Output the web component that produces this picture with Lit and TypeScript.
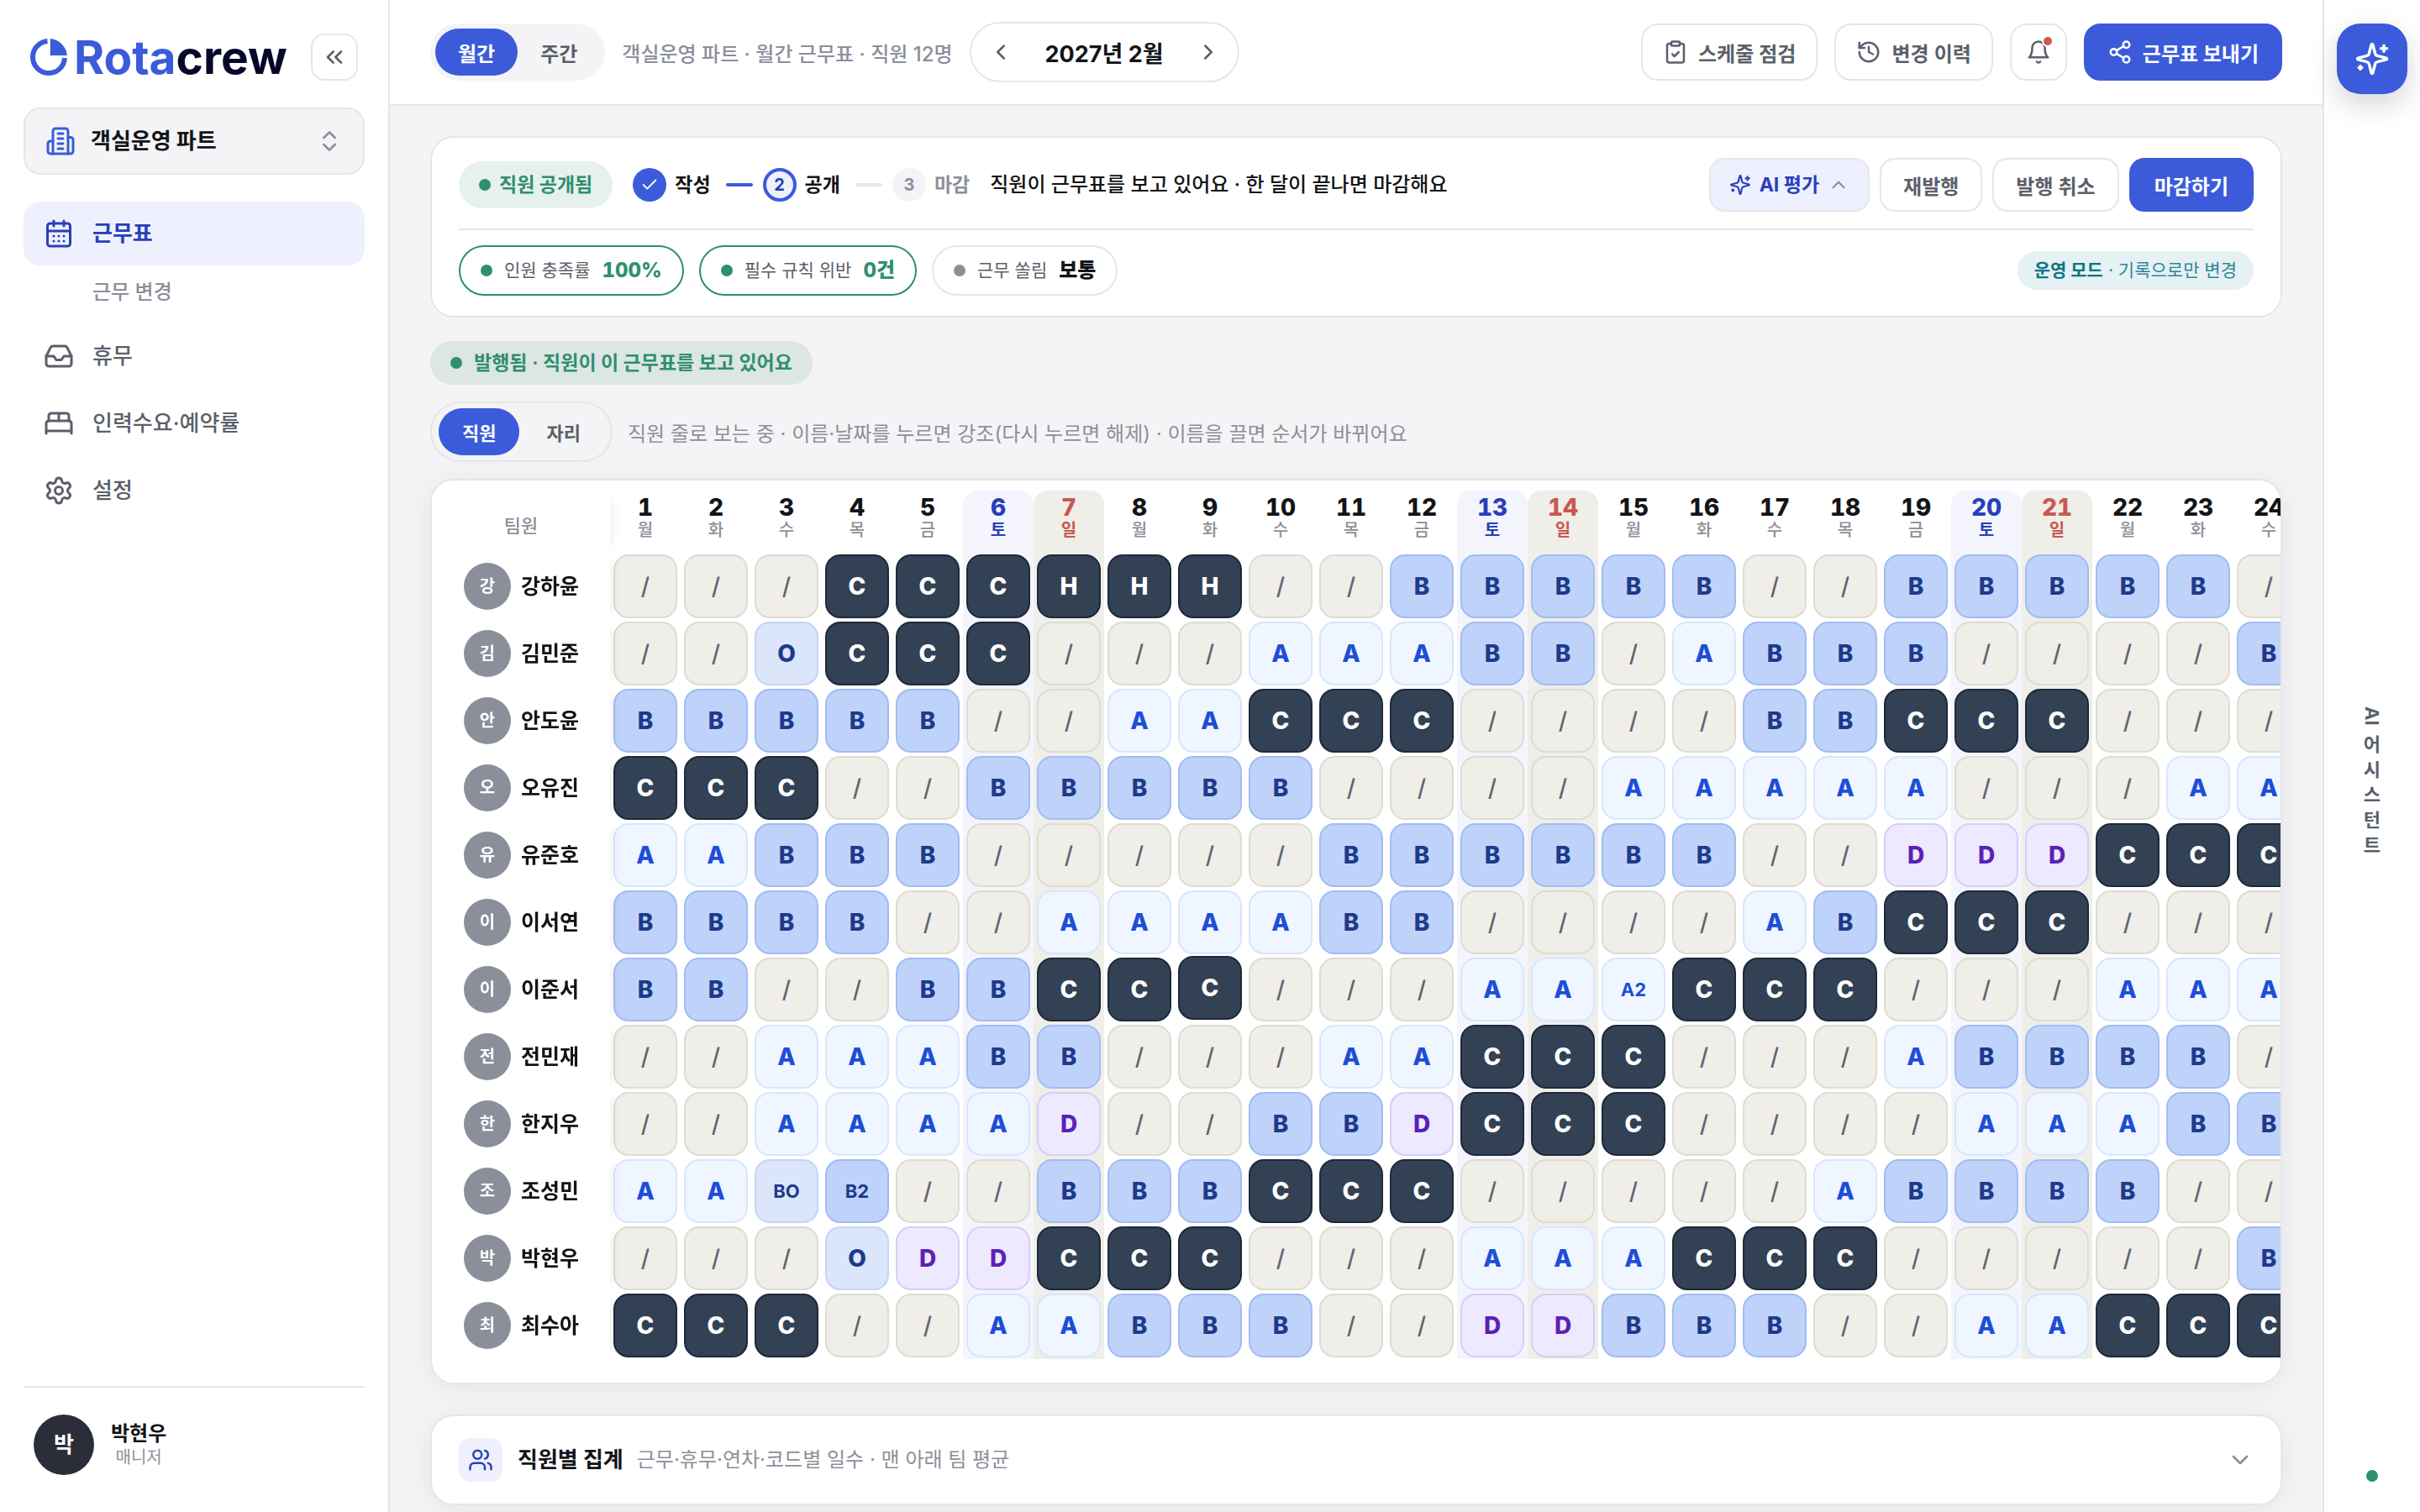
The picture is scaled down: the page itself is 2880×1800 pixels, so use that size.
import { LitElement, html, css, svg, nothing } from "lit";
import { customElement, property, state } from "lit/decorators.js";
import { classMap } from "lit/directives/class-map.js";

const ICONS = {
  collapse: svg`<path d="m11 17-5-5 5-5"/><path d="m18 17-5-5 5-5"/>`,
  building: svg`<path d="M6 22V4a2 2 0 0 1 2-2h8a2 2 0 0 1 2 2v18Z"/><path d="M6 12H4a2 2 0 0 0-2 2v6a2 2 0 0 0 2 2h2"/><path d="M18 9h2a2 2 0 0 1 2 2v9a2 2 0 0 1-2 2h-2"/><path d="M10 6h4"/><path d="M10 10h4"/><path d="M10 14h4"/><path d="M10 18h4"/>`,
  updown: svg`<path d="m7 15 5 5 5-5"/><path d="m7 9 5-5 5 5"/>`,
  calendar: svg`<path d="M8 2v4"/><path d="M16 2v4"/><rect width="18" height="18" x="3" y="4" rx="2"/><path d="M3 10h18"/><path d="M8 14h.01"/><path d="M12 14h.01"/><path d="M16 14h.01"/><path d="M8 18h.01"/><path d="M12 18h.01"/><path d="M16 18h.01"/>`,
  inbox: svg`<path d="M22 12h-6l-2 3h-4l-2-3H2"/><path d="M5.45 5.11 2 12v6a2 2 0 0 0 2 2h16a2 2 0 0 0 2-2v-6l-3.45-6.89A2 2 0 0 0 16.76 4H7.24a2 2 0 0 0-1.79 1.11z"/>`,
  bed: svg`<path d="M2 20v-8a2 2 0 0 1 2-2h16a2 2 0 0 1 2 2v8"/><path d="M4 10V6a2 2 0 0 1 2-2h12a2 2 0 0 1 2 2v4"/><path d="M12 4v6"/><path d="M2 18h20"/>`,
  settings: svg`<path d="M9.671 4.136a2.34 2.34 0 0 1 4.659 0 2.34 2.34 0 0 0 3.319 1.915 2.34 2.34 0 0 1 2.33 4.033 2.34 2.34 0 0 0 0 3.831 2.34 2.34 0 0 1-2.33 4.033 2.34 2.34 0 0 0-3.319 1.915 2.34 2.34 0 0 1-4.659 0 2.34 2.34 0 0 0-3.32-1.915 2.34 2.34 0 0 1-2.33-4.033 2.34 2.34 0 0 0 0-3.831A2.34 2.34 0 0 1 6.35 6.051a2.34 2.34 0 0 0 3.319-1.915"/><circle cx="12" cy="12" r="3"/>`,
  left: svg`<path d="m15 18-6-6 6-6"/>`,
  right: svg`<path d="m9 18 6-6-6-6"/>`,
  up: svg`<path d="m18 15-6-6-6 6"/>`,
  down: svg`<path d="m6 9 6 6 6-6"/>`,
  check: svg`<path d="M20 6 9 17l-5-5"/>`,
  clipboard: svg`<rect width="8" height="4" x="8" y="2" rx="1"/><path d="M16 4h2a2 2 0 0 1 2 2v14a2 2 0 0 1-2 2H6a2 2 0 0 1-2-2V6a2 2 0 0 1 2-2h2"/><path d="m9 14 2 2 4-4"/>`,
  history: svg`<path d="M3 12a9 9 0 1 0 9-9 9.75 9.75 0 0 0-6.74 2.74L3 8"/><path d="M3 3v5h5"/><path d="M12 7v5l4 2"/>`,
  bell: svg`<path d="M6 8a6 6 0 0 1 12 0c0 7 3 9 3 9H3s3-2 3-9"/><path d="M10.3 21a1.94 1.94 0 0 0 3.4 0"/>`,
  share: svg`<circle cx="18" cy="5" r="3"/><circle cx="6" cy="12" r="3"/><circle cx="18" cy="19" r="3"/><path d="m8.59 13.51 6.83 3.98"/><path d="m15.41 6.51-6.82 3.98"/>`,
  sparkles: svg`<path d="M9.937 15.5A2 2 0 0 0 8.5 14.063l-6.135-1.582a.5.5 0 0 1 0-.962L8.5 9.936A2 2 0 0 0 9.937 8.5l1.582-6.135a.5.5 0 0 1 .963 0L14.063 8.5A2 2 0 0 0 15.5 9.937l6.135 1.581a.5.5 0 0 1 0 .964L15.5 14.063a2 2 0 0 0-1.437 1.437l-1.582 6.135a.5.5 0 0 1-.963 0z"/><path d="M20 3v4"/><path d="M22 5h-4"/><path d="M4 17v2"/><path d="M5 18H3"/>`,
  users: svg`<path d="M16 21v-2a4 4 0 0 0-4-4H6a4 4 0 0 0-4 4v2"/><circle cx="9" cy="7" r="4"/><path d="M22 21v-2a4 4 0 0 0-3-3.87"/><path d="M16 3.13a4 4 0 0 1 0 7.75"/>`,
};
type IconName = keyof typeof ICONS;

const icon = (name: IconName, size: number, stroke = 2) => html`
  <svg width=${size} height=${size} viewBox="0 0 24 24" fill="none" stroke="currentColor"
    stroke-width=${stroke} stroke-linecap="round" stroke-linejoin="round" aria-hidden="true">${ICONS[name]}</svg>`;

const WEEKDAYS = ["월", "화", "수", "목", "금", "토", "일"];
const DAYS = Array.from({ length: 24 }, (_, i) => ({ day: i + 1, label: WEEKDAYS[i % 7] }));

const ROSTER: { name: string; shifts: string[] }[] = [
  ["강하윤", "/ / / C C C H H H / / B B B B B / / B B B B B /"],
  ["김민준", "/ / O C C C / / / A A A B B / A B B B / / / / B"],
  ["안도윤", "B B B B B / / A A C C C / / / / B B C C C / / /"],
  ["오유진", "C C C / / B B B B B / / / / A A A A A / / / A A"],
  ["유준호", "A A B B B / / / / / B B B B B B / / D D D C C C"],
  ["이서연", "B B B B / / A A A A B B / / / / A B C C C / / /"],
  ["이준서", "B B / / B B C C C / / / A A A2 C C C / / / A A A"],
  ["전민재", "/ / A A A B B / / / A A C C C / / / A B B B B /"],
  ["한지우", "/ / A A A A D / / B B D C C C / / / / A A A B B"],
  ["조성민", "A A BO B2 / / B B B C C C / / / / / A B B B B / /"],
  ["박현우", "/ / / O D D C C C / / / A A A C C C / / / / / B"],
  ["최수아", "C C C / / A A B B B / / D D B B B / / A A C C C"],
].map(([name, codes]) => ({ name, shifts: codes.split(" ") }));

const SHIFT_CLASS: Record<string, string> = {
  "/": "off", A: "a", A2: "a", B: "b", B2: "b", C: "c", H: "c", D: "d", O: "o", BO: "o",
};

const base = css`
  * { box-sizing: border-box; }
  button {
    font: inherit; color: inherit; background: none; border: 0; padding: 0; margin: 0; cursor: pointer;
  }
  a { color: inherit; text-decoration: none; }
  svg { display: block; flex: none; }
`;

@customElement("rota-sidebar")
export class RotaSidebar extends LitElement {
  static styles = [base, css`
    :host { display: flex; flex-direction: column; background: #fff; border-right: 2px solid #e6e6ea; padding: 40px 28px 44px; }
    .head { display: flex; align-items: center; justify-content: space-between; padding: 0 8px; }
    .logo { display: flex; align-items: center; gap: 8px; font-size: 55px; line-height: 56px; font-weight: 700; color: #07072b; }
    .logo .blue { color: #3b5bdb; }
    .collapse {
      width: 56px; height: 56px; border: 2px solid #e6e6ea; border-radius: 16px; color: #5b5f6b;
      display: flex; align-items: center; justify-content: center;
    }
    .team {
      display: flex; align-items: center; gap: 18px; height: 80px; margin-top: 32px; padding: 0 24px;
      background: #f4f4f6; border: 2px solid #e6e6ea; border-radius: 20px;
      font-size: 26px; font-weight: 700; color: #131417; text-align: left;
    }
    .team .lead { color: #3b5bdb; }
    .team .name { flex: 1; }
    .team .tail { color: #8b8f9a; }
    nav { display: flex; flex-direction: column; gap: 4px; margin-top: 32px; }
    .item {
      display: flex; align-items: center; gap: 22px; height: 76px; padding: 0 24px; border-radius: 20px;
      font-size: 26px; font-weight: 500; color: #5b5f6b;
    }
    .item.active { background: #eef0fe; color: #2740b8; font-weight: 700; }
    .sub { height: 56px; line-height: 56px; margin-bottom: 6px; padding-left: 82px; font-size: 24px; font-weight: 500; color: #8b8f9a; }
    .user { margin-top: auto; border-top: 2px solid #e6e6ea; padding: 32px 12px 0; }
    .user button { display: flex; align-items: center; gap: 20px; }
    .avatar {
      width: 72px; height: 72px; border-radius: 50%; background: #2b2e38; color: #fff;
      display: flex; align-items: center; justify-content: center; font-size: 26px; font-weight: 700;
    }
    .who { display: flex; flex-direction: column; }
    .who b { font-size: 24px; line-height: 30px; color: #131417; }
    .who span { font-size: 20px; line-height: 26px; color: #8b8f9a; }
  `];

  render() {
    return html`
      <div class="head">
        <div class="logo">
          <svg width="44" height="44" viewBox="0 0 44 44" aria-hidden="true">
            <path d="M20.5 3.06A19 19 0 1 0 40.97 23" fill="none" stroke="#3b5bdb" stroke-width="6"/>
            <path d="M23.8 20V.1A22 22 0 0 1 43.9 20Z" fill="#3b5bdb"/>
          </svg>
          <span><span class="blue">Rota</span>crew</span>
        </div>
        <button class="collapse" aria-label="사이드바 접기">${icon("collapse", 32)}</button>
      </div>
      <button class="team">
        <span class="lead">${icon("building", 36)}</span>
        <span class="name">객실운영 파트</span>
        <span class="tail">${icon("updown", 32)}</span>
      </button>
      <nav>
        <a class="item active" href="#schedule" aria-current="page">${icon("calendar", 36)}근무표</a>
        <a class="sub" href="#changes">근무 변경</a>
        <a class="item" href="#leave">${icon("inbox", 36)}휴무</a>
        <a class="item" href="#demand">${icon("bed", 36)}인력수요·예약률</a>
        <a class="item" href="#settings">${icon("settings", 36)}설정</a>
      </nav>
      <div class="user">
        <button>
          <span class="avatar">박</span>
          <span class="who"><b>박현우</b><span>매니저</span></span>
        </button>
      </div>`;
  }
}

@customElement("rota-segment")
export class RotaSegment extends LitElement {
  @property({ attribute: false }) options: string[] = [];
  @property({ type: Boolean, reflect: true }) outlined = false;
  @state() private selected = 0;

  static styles = [base, css`
    :host { display: flex; padding: 6px; border-radius: 36px; background: #f4f4f6; font-size: 24px; font-weight: 600; }
    :host([outlined]) { border: 2px solid #e6e6ea; gap: 4px; padding: 6px 8px; font-size: 22px; }
    button { height: 56px; padding: 0 27px; border-radius: 28px; color: #5b5f6b; }
    :host([outlined]) button { padding: 0 28px; }
    button.on { background: #3b5bdb; font-weight: 700; }
    :host button.on { color: #fff; }
  `];

  render() {
    return this.options.map((label, i) => html`
      <button class=${classMap({ on: i === this.selected })} aria-pressed=${i === this.selected}
        @click=${() => (this.selected = i)}>${label}</button>`);
  }
}

@customElement("rota-topbar")
export class RotaTopbar extends LitElement {
  static styles = [base, css`
    :host {
      display: flex; align-items: center; gap: 20px; height: 126px; padding: 0 48px;
      background: #fff; border-bottom: 2px solid #e6e6ea; font-size: 24px; line-height: normal;
    }
    .caption { color: #8b8f9a; font-weight: 500; }
    .month { display: flex; align-items: center; height: 72px; padding: 0 6px; border: 2px solid #e6e6ea; border-radius: 36px; }
    .month button { width: 58px; height: 56px; display: flex; align-items: center; justify-content: center; color: #5b5f6b; }
    .month b { font-size: 27px; padding: 0 24px; color: #131417; }
    .actions { display: flex; gap: 20px; margin-left: auto; }
    .btn {
      display: flex; align-items: center; gap: 12px; height: 68px; padding: 0 24px;
      border: 2px solid #e6e6ea; border-radius: 20px; color: #5b5f6b; font-weight: 600;
    }
    .bell { position: relative; width: 68px; padding: 0; justify-content: center; }
    .bell::after {
      content: ""; position: absolute; top: 14px; right: 16px; width: 10px; height: 10px;
      border-radius: 50%; background: #c9584f; box-shadow: 0 0 0 2px #fff;
    }
    .primary { background: #3b5bdb; border-color: #3b5bdb; color: #fff; padding: 0 26px; font-weight: 700; }
  `];

  render() {
    return html`
      <rota-segment .options=${["월간", "주간"]}></rota-segment>
      <span class="caption">객실운영 파트 · 월간 근무표 · 직원 12명</span>
      <div class="month">
        <button aria-label="이전 달">${icon("left", 30)}</button>
        <b>2027년 2월</b>
        <button aria-label="다음 달">${icon("right", 30)}</button>
      </div>
      <div class="actions">
        <button class="btn">${icon("clipboard", 30)}스케줄 점검</button>
        <button class="btn">${icon("history", 30)}변경 이력</button>
        <button class="btn bell" aria-label="알림">${icon("bell", 30)}</button>
        <button class="btn primary">${icon("share", 30)}근무표 보내기</button>
      </div>`;
  }
}

@customElement("rota-status")
export class RotaStatus extends LitElement {
  static styles = [base, css`
    :host { display: block; background: #fff; border: 2px solid #e6e6ea; border-radius: 28px; padding: 24px 32px; font-size: 24px; }
    .row { display: flex; align-items: center; }
    .row + .row { border-top: 2px solid #e6e6ea; margin-top: 20px; padding-top: 18px; gap: 18px; }
    .dot { width: 14px; height: 14px; border-radius: 50%; background: currentColor; flex: none; }
    .state {
      display: flex; align-items: center; gap: 10px; height: 56px; padding: 0 24px; border-radius: 28px;
      background: #e6f1ed; color: #2f8f6f; font-size: 23px; font-weight: 700;
    }
    .steps { display: flex; align-items: center; list-style: none; margin: 0 24px; padding: 0; font-size: 23px; font-weight: 600; color: #131417; }
    .steps li { display: flex; align-items: center; gap: 10px; }
    .steps li + li::before { content: ""; width: 32px; height: 4px; border-radius: 2px; background: #e6e6ea; margin: 0 2px 0 18px; }
    .steps li.now::before { background: #3b5bdb; }
    .num {
      width: 40px; height: 40px; border-radius: 50%; display: flex; align-items: center; justify-content: center;
      font-size: 20px; font-weight: 700; background: #f4f4f6; color: #8b8f9a;
    }
    .done .num { background: #3b5bdb; color: #fff; }
    .now .num { border: 4px solid #3b5bdb; background: #eef0fe; color: #2740b8; }
    .steps .next { color: #8b8f9a; }
    .note { color: #131417; font-weight: 500; }
    .actions { display: flex; gap: 12px; margin-left: auto; line-height: normal; }
    .btn {
      display: flex; align-items: center; gap: 12px; height: 64px; padding: 0 26px;
      border: 2px solid #e6e6ea; border-radius: 18px; color: #5b5f6b; font-weight: 600;
    }
    .ai { background: #eef0fe; color: #2740b8; font-weight: 700; font-size: 23px; line-height: 32px; padding: 0 22px; gap: 10px; }
    .ai .tail { color: #8b8f9a; }
    .primary { background: #3b5bdb; border-color: #3b5bdb; color: #fff; padding: 0 28px; font-weight: 700; }
    .chip {
      display: flex; align-items: center; gap: 14px; height: 60px; padding: 0 24px;
      border: 2px solid #e6e6ea; border-radius: 30px; color: #8b8f9a;
    }
    .chip span { font-size: 21px; color: #5b5f6b; }
    .chip b { color: #131417; font-weight: 800; font-variant-numeric: tabular-nums; }
    .chip.ok { border-color: #2f8f6f; color: #2f8f6f; }
    .chip.ok b { color: #2f8f6f; }
    .mode {
      margin-left: auto; display: flex; align-items: center; gap: 6px; height: 46px; padding: 0 20px;
      border-radius: 23px; background: #e5f1f3; color: #0f7486; font-size: 21px;
    }
    .mode span { opacity: 0.85; }
  `];

  render() {
    return html`
      <div class="row">
        <span class="state"><i class="dot"></i>직원 공개됨</span>
        <ol class="steps">
          <li class="done"><span class="num">${icon("check", 22)}</span>작성</li>
          <li class="now"><span class="num">2</span>공개</li>
          <li class="next"><span class="num">3</span>마감</li>
        </ol>
        <span class="note">직원이 근무표를 보고 있어요 · 한 달이 끝나면 마감해요</span>
        <div class="actions">
          <button class="btn ai">${icon("sparkles", 26)}AI 평가<span class="tail">${icon("up", 26)}</span></button>
          <button class="btn">재발행</button>
          <button class="btn">발행 취소</button>
          <button class="btn primary">마감하기</button>
        </div>
      </div>
      <div class="row">
        <div class="chip ok"><i class="dot"></i><span>인원 충족률</span><b>100%</b></div>
        <div class="chip ok"><i class="dot"></i><span>필수 규칙 위반</span><b>0건</b></div>
        <div class="chip"><i class="dot"></i><span>근무 쏠림</span><b>보통</b></div>
        <div class="mode"><b>운영 모드</b><span>· 기록으로만 변경</span></div>
      </div>`;
  }
}

@customElement("rota-grid")
export class RotaGrid extends LitElement {
  @state() private raised = { name: "이준서", day: 9 };

  static styles = [base, css`
    :host {
      display: block; overflow: hidden; background: #fff; border: 2px solid #e6e6ea; border-radius: 28px;
      padding: 12px 0 28px; box-shadow: 0 4px 32px rgba(24, 26, 56, 0.07);
    }
    table { border-collapse: separate; border-spacing: 0; table-layout: fixed; width: 0; }
    .c-name { width: 212px; }
    .c-day { width: 84px; }
    th, td { padding: 0; }
    thead th { height: 74px; vertical-align: top; padding-top: 5px; font-weight: 400; }
    thead .num { display: block; font-size: 28px; line-height: 30px; font-weight: 800; font-variant-numeric: tabular-nums; color: #131417; }
    thead .wd { display: block; font-size: 20px; line-height: 24px; font-weight: 500; color: #8b8f9a; }
    .sat { background: #f4f5fc; }
    .sun { background: #efeee9; }
    thead .sat, thead .sun { border-radius: 16px 16px 0 0; }
    thead .sat .num, thead .sat .wd { color: #2740b8; }
    thead .sun .num, thead .sun .wd { color: #c9584f; }
    thead .sat .wd, thead .sun .wd { font-weight: 700; }
    .name { position: sticky; left: 0; z-index: 1; background: #fff; box-shadow: 12px 0 12px -10px rgba(24, 26, 56, 0.08); }
    thead .name { padding-top: 26px; font-size: 22px; line-height: 32px; font-weight: 500; color: #8b8f9a; }
    .person { display: flex; align-items: center; gap: 12px; height: 80px; padding-left: 38px; font-size: 25px; font-weight: 600; color: #131417; }
    .face {
      width: 56px; height: 56px; border-radius: 50%; background: #8b8f9a; color: #fff;
      display: flex; align-items: center; justify-content: center; font-size: 20px; font-weight: 700;
    }
    .shift {
      display: block; width: 76px; height: 76px; margin: 2px 4px; border: 2px solid; border-radius: 18px;
      font-size: 28px; font-weight: 800; line-height: 1; text-align: center;
    }
    .shift.long { font-size: 22px; font-weight: 700; }
    .shift.raised { transform: translateY(-2px); }
    .shift.off { background: #efeee9; border-color: #dedcd2; color: #5f6472; font-weight: 500; }
    .a { background: #eff6ff; border-color: #d6e6fd; color: #1d4ed8; }
    .b { background: #bfd2f9; border-color: #a0bdf3; color: #1e3a8a; }
    .c { background: #334155; border-color: #1e293b; color: #fff; }
    .d { background: #ede9fe; border-color: #d8cdf7; color: #5b21b6; }
    .o { background: #dbe6fb; border-color: #c5d3f8; color: #1e3a8a; }
  `];

  private weekend(i: number) {
    return i % 7 === 5 ? "sat" : i % 7 === 6 ? "sun" : nothing;
  }

  private shiftCell(name: string, code: string, i: number) {
    const day = i + 1;
    const classes = {
      shift: true,
      [SHIFT_CLASS[code]]: true,
      long: code.length > 1,
      raised: this.raised.name === name && this.raised.day === day,
    };
    return html`
      <td class=${this.weekend(i)}>
        <button class=${classMap(classes)} @pointerenter=${() => (this.raised = { name, day })}>${code}</button>
      </td>`;
  }

  render() {
    return html`
      <table>
        <colgroup>
          <col class="c-name">
          ${DAYS.map(() => html`<col class="c-day">`)}
        </colgroup>
        <thead>
          <tr>
            <th class="name" scope="col">팀원</th>
            ${DAYS.map((d, i) => html`
              <th class=${this.weekend(i)} scope="col"><span class="num">${d.day}</span><span class="wd">${d.label}</span></th>`)}
          </tr>
        </thead>
        <tbody>
          ${ROSTER.map((r) => html`
            <tr>
              <th class="name" scope="row"><div class="person"><span class="face">${r.name[0]}</span>${r.name}</div></th>
              ${r.shifts.map((code, i) => this.shiftCell(r.name, code, i))}
            </tr>`)}
        </tbody>
      </table>`;
  }
}

@customElement("rota-rail")
export class RotaRail extends LitElement {
  static styles = [base, css`
    :host {
      display: flex; flex-direction: column; align-items: center; justify-content: space-between;
      background: #fff; border-left: 2px solid #e6e6ea; padding: 28px 0 36px;
    }
    .ai {
      width: 84px; height: 84px; border-radius: 28px; background: #3b5bdb; color: #fff;
      display: flex; align-items: center; justify-content: center; box-shadow: 0 12px 32px rgba(24, 26, 56, 0.18);
    }
    .label { display: flex; flex-direction: column; align-items: center; gap: 8px; font-size: 22px; font-weight: 700; color: #5b5f6b; }
    .turned { writing-mode: vertical-rl; }
    .stacked { width: 24px; line-height: 30px; text-align: center; word-break: break-all; }
    .dot { width: 14px; height: 14px; border-radius: 50%; background: #2f8f6f; }
  `];

  render() {
    return html`
      <button class="ai" aria-label="AI 어시스턴트 열기">${icon("sparkles", 42)}</button>
      <div class="label"><span class="turned">AI</span><span class="stacked">어시스턴트</span></div>
      <span class="dot"></span>`;
  }
}

@customElement("app-root")
export class AppRoot extends LitElement {
  static styles = [base, css`
    :host {
      display: grid; grid-template-columns: 464px minmax(0, 1fr) 116px; grid-template-rows: minmax(0, 1fr);
      height: 100vh; overflow: hidden; background: #f4f4f6; color: #131417;
      font-family: Inter, "Noto Sans CJK KR", sans-serif; line-height: 1.4;
    }
    main { display: flex; flex-direction: column; min-width: 0; min-height: 0; }
    rota-topbar { flex: none; }
    .content { padding: 36px 48px 48px; }
    .published {
      display: flex; width: fit-content; align-items: center; gap: 14px; height: 52px; margin-top: 28px; padding: 0 24px;
      border-radius: 26px; background: #dce6e4; color: #2f8f6f; font-size: 23px; font-weight: 700;
    }
    .dot { width: 14px; height: 14px; border-radius: 50%; background: currentColor; }
    .view { display: flex; align-items: center; gap: 18px; margin: 20px 0; font-size: 24px; line-height: normal; color: #8b8f9a; }
    .summary {
      display: flex; align-items: center; width: 100%; height: 108px; margin-top: 36px; padding: 0 32px;
      background: #fff; border: 2px solid #e6e6ea; border-radius: 28px; box-shadow: 0 4px 32px rgba(24, 26, 56, 0.07);
      font-size: 24px; color: #8b8f9a; text-align: left;
    }
    .tile {
      display: flex; align-items: center; justify-content: center; width: 52px; height: 52px; margin-right: 18px;
      border-radius: 14px; background: #eef0fe; color: #2740b8;
    }
    .summary b { font-size: 26px; color: #131417; margin-right: 16px; }
    .tail { margin-left: auto; }
  `];

  render() {
    return html`
      <rota-sidebar></rota-sidebar>
      <main>
        <rota-topbar></rota-topbar>
        <div class="content">
          <rota-status></rota-status>
          <div class="published"><i class="dot"></i>발행됨 · 직원이 이 근무표를 보고 있어요</div>
          <div class="view">
            <rota-segment outlined .options=${["직원", "자리"]}></rota-segment>
            <span>직원 줄로 보는 중 · 이름·날짜를 누르면 강조(다시 누르면 해제) · 이름을 끌면 순서가 바뀌어요</span>
          </div>
          <rota-grid></rota-grid>
          <button class="summary" aria-expanded="false">
            <span class="tile">${icon("users", 30)}</span>
            <b>직원별 집계</b>
            <span>근무·휴무·연차·코드별 일수 · 맨 아래 팀 평균</span>
            <span class="tail">${icon("down", 32)}</span>
          </button>
        </div>
      </main>
      <rota-rail></rota-rail>`;
  }
}
